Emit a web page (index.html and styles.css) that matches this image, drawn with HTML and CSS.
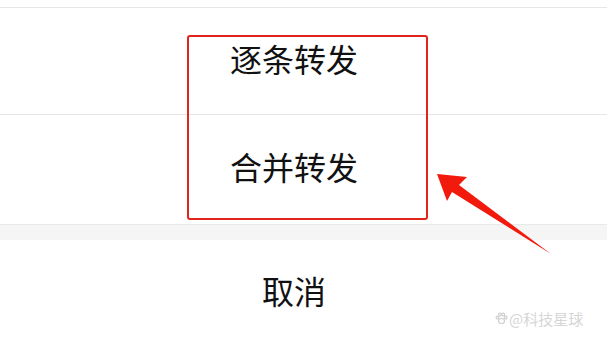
FILE: index.html
```html
<!DOCTYPE html>
<html lang="zh">
<head>
<meta charset="utf-8">
<link rel="stylesheet" href="styles.css">
</head>
<body>
<div class="sheet">
  <div class="top-strip"></div>
  <div class="option option-first">逐条转发</div>
  <div class="option option-second">合并转发</div>
  <div class="gap-band"></div>
  <div class="option option-cancel">取消</div>
</div>
<div class="highlight-box"></div>
<svg class="arrow" width="607" height="345" viewBox="0 0 607 345">
  <polygon points="437,174 467,177 459,185 551,254 452,192 447,201" fill="#f2190d"/>
</svg>
<div class="watermark">
  <svg class="paw" width="13" height="13" viewBox="0 0 13 13">
    <g fill="none" stroke="#cfcfcf" stroke-width="1.2">
      <ellipse cx="6.5" cy="9" rx="3" ry="2.5"/>
      <circle cx="2.5" cy="5.5" r="1.4"/>
      <circle cx="5" cy="2.6" r="1.4"/>
      <circle cx="8.2" cy="2.6" r="1.4"/>
      <circle cx="10.7" cy="5.5" r="1.4"/>
    </g>
  </svg>
  <span class="wm-text">@科技星球</span>
</div>
</body>
</html>
```

FILE: styles.css
```css
html, body {
  margin: 0;
  padding: 0;
  background: #ffffff;
  width: 607px;
  height: 345px;
  overflow: hidden;
}

body {
  position: relative;
  font-family: "Noto Sans CJK SC", "Noto Sans", sans-serif;
  color: #111111;
}

.sheet {
  display: flex;
  flex-direction: column;
}

.top-strip {
  height: 7px;
  border-bottom: 1px solid #e6e6e6;
}

.option {
  display: flex;
  align-items: center;
  justify-content: center;
  padding-right: 19px;
  padding-bottom: 7px;
  box-sizing: border-box;
  font-size: 32px;
  font-weight: 400;
  line-height: 1;
}

.option-first {
  height: 107px;
  border-bottom: 1px solid #e6e6e6;
}

.option-second {
  height: 110px;
  border-bottom: 1px solid #e9e9e9;
}

.gap-band {
  height: 15px;
  background: #f5f5f5;
}

.option-cancel {
  height: 107px;
}

.highlight-box {
  position: absolute;
  left: 187px;
  top: 35px;
  width: 237px;
  height: 181px;
  border: 2px solid #e3241c;
  border-radius: 3px;
}

.arrow {
  position: absolute;
  left: 0;
  top: 0;
}

.watermark {
  position: absolute;
  left: 495px;
  top: 311px;
  display: flex;
  align-items: center;
  gap: 1px;
}

.wm-text {
  font-size: 15px;
  line-height: 1;
  color: #d6d6d6;
}
```
